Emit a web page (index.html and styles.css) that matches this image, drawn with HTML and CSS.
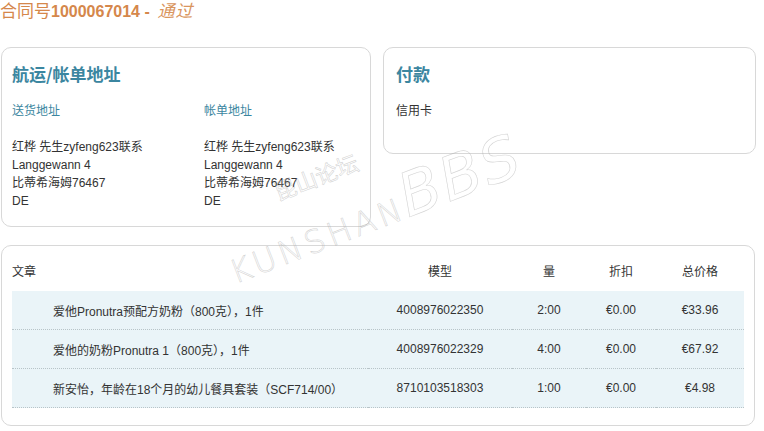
FILE: index.html
```html
<!DOCTYPE html>
<html lang="zh-CN">
<head>
  <meta charset="UTF-8">
  <title>合同号1000067014</title>
  <link rel="stylesheet" href="styles.css">
</head>
<body>
  <div class="page">
    <h1 class="order-title">合同号<b>1000067014 -</b> <i>通过</i></h1>

    <div class="info-row">
      <div class="box address-box">
        <h2>航运/帐单地址</h2>
        <div class="address-cols">
          <div class="address">
            <h3>送货地址</h3>
            <p>红桦 先生zyfeng623联系<br>Langgewann 4<br>比蒂希海姆76467<br>DE</p>
          </div>
          <div class="address">
            <h3>帐单地址</h3>
            <p>红桦 先生zyfeng623联系<br>Langgewann 4<br>比蒂希海姆76467<br>DE</p>
          </div>
        </div>
      </div>

      <div class="box payment-box">
        <h2>付款</h2>
        <p>信用卡</p>
      </div>
    </div>

    <div class="box items-box">
      <table class="items">
        <thead>
          <tr>
            <th class="name">文章</th>
            <th>模型</th>
            <th>量</th>
            <th>折扣</th>
            <th>总价格</th>
          </tr>
        </thead>
        <tbody>
          <tr>
            <td class="name">爱他Pronutra预配方奶粉（800克），1件</td>
            <td>4008976022350</td>
            <td>2:00</td>
            <td>€0.00</td>
            <td>€33.96</td>
          </tr>
          <tr>
            <td class="name">爱他的奶粉Pronutra 1（800克），1件</td>
            <td>4008976022329</td>
            <td>4:00</td>
            <td>€0.00</td>
            <td>€67.92</td>
          </tr>
          <tr>
            <td class="name">新安怡，年龄在18个月的幼儿餐具套装（SCF714/00）</td>
            <td>8710103518303</td>
            <td>1:00</td>
            <td>€0.00</td>
            <td>€4.98</td>
          </tr>
        </tbody>
      </table>
    </div>

    <!-- forum watermark from the screenshot -->
    <div class="watermark">
      <span class="wm-cn">昆山论坛</span>
      <span class="wm-en">KUNSHAN</span><span class="wm-bbs">BBS</span>
    </div>
  </div>
</body>
</html>
```

FILE: styles.css
```css
body {
  margin: 0;
  background: #fff;
  color: #333;
  font-family: "Liberation Sans", "Noto Sans CJK SC", sans-serif;
  font-size: 12px;
}

.page {
  position: relative;
  width: 756px;
  overflow: hidden;
  padding-bottom: 5px;
}

.order-title {
  margin: 0;
  padding-top: 2px;
  height: 20px;
  line-height: 20px;
  font-size: 17px;
  font-weight: normal;
  color: #d5874b;
  font-family: "Liberation Sans", "Noto Sans CJK SC", sans-serif;
}

.order-title b {
  font-size: 16px;
  font-weight: bold;
}

.order-title i {
  font-style: italic;
  color: #d9955e;
  letter-spacing: 1px;
  margin-left: 3px;
}

.info-row {
  display: flex;
  align-items: flex-start;
  gap: 12px;
  margin: 25px 0 0 1px;
}

.box {
  border: 1px solid #d8d8d8;
  border-radius: 10px;
  background: #fff;
}

.box h2 {
  margin: 0;
  font-size: 17px;
  font-weight: bold;
  color: #3b86a0;
  font-family: "Noto Sans CJK SC", sans-serif;
  line-height: 20px;
}

.address-box {
  width: 349px;
  height: 162px;
  padding: 16px 10px 0 10px;
}

.address-cols {
  display: grid;
  grid-template-columns: 192px 1fr;
  margin-top: 20px;
}

.address h3 {
  margin: 0;
  font-size: 12px;
  font-weight: normal;
  color: #3b86a0;
  line-height: 14px;
}

.address p {
  margin: 20px 0 0;
  line-height: 18px;
}

.payment-box {
  width: 348px;
  height: 89px;
  padding: 16px 12px 0 12px;
}

.payment-box p {
  margin: 20px 0 0;
  line-height: 14px;
}

.items-box {
  margin: 18px 0 0 1px;
  width: 732px;
  padding: 16px 10px 17px 10px;
}

.items {
  width: 100%;
  border-collapse: collapse;
  table-layout: fixed;
}

.items th {
  font-weight: normal;
  text-align: center;
  height: 20px;
  padding: 0 0 9px;
  line-height: 14px;
}

.items th.name {
  text-align: left;
}

.items td {
  background: #eaf4f8;
  border-bottom: 1px dotted #b8c4c8;
  height: 38px;
  text-align: center;
  padding: 0;
  white-space: nowrap;
}

.items td.name {
  text-align: left;
  padding-left: 41px;
}

.items th:nth-child(1) { width: 356px; }
.items th:nth-child(2) { width: 144px; }
.items th:nth-child(3) { width: 74px; }
.items th:nth-child(4) { width: 70px; }

.watermark {
  position: absolute;
  left: 240px;
  top: 195px;
  width: 330px;
  transform: rotate(-21deg);
  transform-origin: left bottom;
  color: transparent;
  -webkit-text-stroke: 0.6px rgba(170, 170, 170, 0.5);
  font-family: "DejaVu Sans", "Noto Sans CJK SC", sans-serif;
  pointer-events: none;
  white-space: nowrap;
}

.wm-cn {
  display: block;
  margin-left: 70px;
  font-size: 22px;
}

.wm-en {
  font-size: 32px;
  letter-spacing: 4px;
  font-weight: 200;
}

.wm-bbs {
  font-size: 60px;
  font-style: italic;
  letter-spacing: 2px;
}
```
